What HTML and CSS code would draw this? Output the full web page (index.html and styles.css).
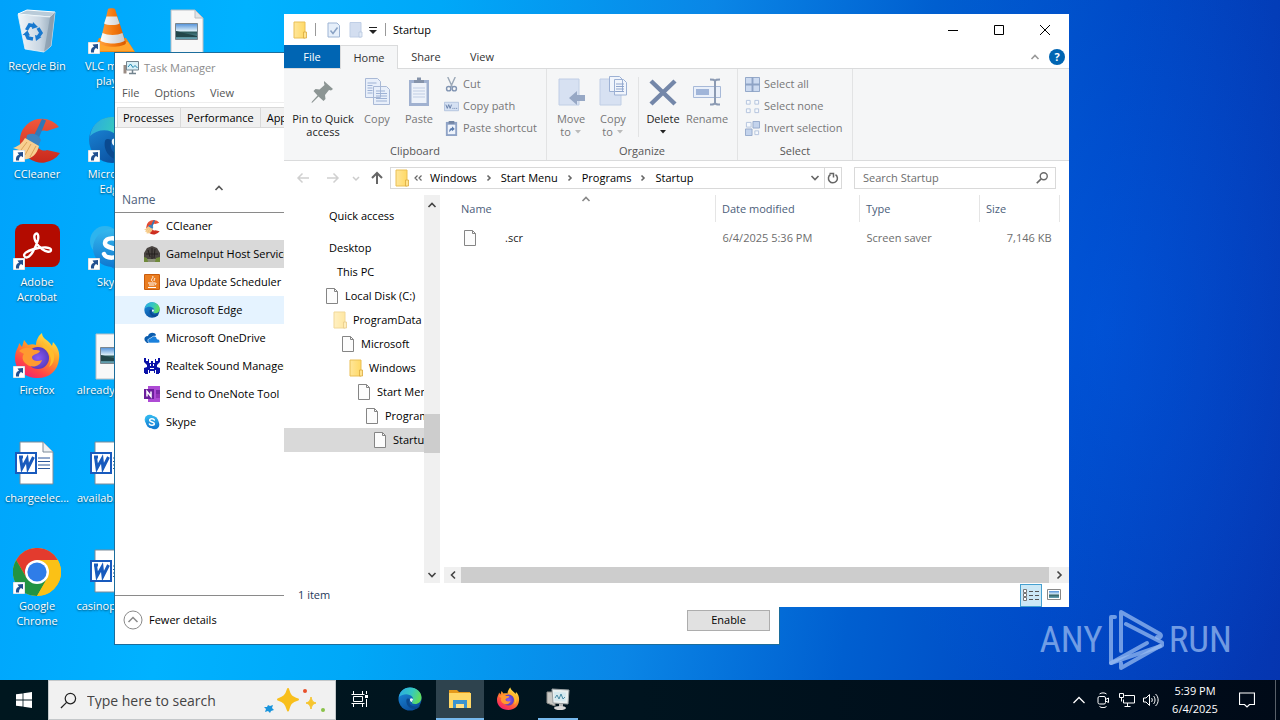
FILE: index.html
```html
<!DOCTYPE html>
<html lang="en">
<head>
<meta charset="utf-8">
<title>Startup</title>
<link rel="stylesheet" href="styles.css">
</head>
<body>
<svg class="defs" aria-hidden="true">
  <defs>
    <linearGradient id="gEdgeA" x1="0" y1="0" x2="1" y2="0.3"><stop offset="0" stop-color="#2aa8e6"/><stop offset=".6" stop-color="#35c8c0"/><stop offset="1" stop-color="#5fdc62"/></linearGradient>
    <linearGradient id="gEdgeB" x1="0" y1="0" x2="0.6" y2="1"><stop offset="0" stop-color="#1c8fe0"/><stop offset="1" stop-color="#0b4f9e"/></linearGradient>
    <linearGradient id="gFox" x1="0.8" y1="0" x2="0.2" y2="1"><stop offset="0" stop-color="#fff04a"/><stop offset=".4" stop-color="#ff9a28"/><stop offset=".75" stop-color="#ff4548"/><stop offset="1" stop-color="#f01c78"/></linearGradient>
    <radialGradient id="gFoxIn"><stop offset="0" stop-color="#8a5cf5"/><stop offset="1" stop-color="#5a3cc0"/></radialGradient>
    <linearGradient id="gCone" x1="0" x2="1"><stop offset="0" stop-color="#ffa040"/><stop offset=".5" stop-color="#f47a10"/><stop offset="1" stop-color="#d85a00"/></linearGradient>
    <linearGradient id="gConeW" x1="0" x2="1"><stop offset="0" stop-color="#ffffff"/><stop offset="1" stop-color="#c4c8cc"/></linearGradient>
    <linearGradient id="gBin" x1="0" x2="1"><stop offset="0" stop-color="#f2f6fa"/><stop offset=".6" stop-color="#c9d6e2"/><stop offset="1" stop-color="#8da3b5"/></linearGradient>
    <linearGradient id="gCc" x1="0" y1="0" x2="0" y2="1"><stop offset="0" stop-color="#f0583c"/><stop offset="1" stop-color="#c8281c"/></linearGradient>
    <linearGradient id="gPhoto" x1="0" y1="0" x2="0" y2="1"><stop offset="0" stop-color="#4f8fd8"/><stop offset=".45" stop-color="#d8ecf8"/><stop offset=".55" stop-color="#2d5a5c"/><stop offset="1" stop-color="#6aa6b8"/></linearGradient>
    <linearGradient id="gSky" x1="0" y1="0" x2="0" y2="1"><stop offset="0" stop-color="#35b8ee"/><stop offset="1" stop-color="#0f78d0"/></linearGradient>
    <linearGradient id="gFold" x1="0" x2="1"><stop offset="0" stop-color="#ffe69a"/><stop offset="1" stop-color="#ffd965"/></linearGradient>
  </defs>
  <symbol id="shortcut" viewBox="0 0 12 12"><path d="M0 0h12v12H0z" fill="#fff" stroke="#9ab" stroke-width=".6"/><path d="M3 10.500C2.600 7.500 3.500 5.500 6 4.800L4.500 2.500 10 2v5.300L8 6.100C6.500 7 6 8.200 6 10.500z" fill="#23508f"/></symbol>
  <symbol id="bin" viewBox="0 0 48 48"><path d="M5 6l9-4 28 2-5 5z" fill="#b9cbd9" stroke="#fff"/><path d="M5 6.500L37 9l5-5L38 38l-7 6-19-3z" fill="url(#gBin)" stroke="#eef4f8" stroke-width=".8"/><path d="M37 9l5-5L38 38l-7 6z" fill="#8499aa" opacity=".7"/><g fill="none" stroke="#1879cf" stroke-width="3.400"><path d="M13.500 22l3-5 5 1"/><path d="M25 20l3 5-3 4"/><path d="M20 31l-5-1-2-4.500"/></g><path d="M20 14l5 5-6 2zM28.500 29l-5.500 4-1-6zM9.500 27l5-4.500 2.500 5z" fill="#1879cf"/></symbol>
  <symbol id="cone" viewBox="0 0 48 48"><path d="M8 37l3-7h27l9 14H6z" fill="#f08a18"/><path d="M4 40l6-5 30-1 6 9H5z" fill="#ffa52e"/><path d="M20 1c0-1 7-1 7 0l11 34c-2 5-24 5-26 0z" fill="url(#gCone)"/><path d="M18.500 8.500h10.500l2.500 7c-3 2-12 2-15.400 0zM14.500 25c5 2.500 15 2.500 20 0l2.300 7.500c-4 4-20 4-24.500 0z" fill="url(#gConeW)"/></symbol>
  <symbol id="photo" viewBox="0 0 48 48"><path d="M8 2h24l8 8v37H8z" fill="#f8f8f8" stroke="#b9bec3"/><path d="M32 2v8h8z" fill="#dfe3e6" stroke="#b9bec3"/><path d="M12.500 15.500h22v16h-22z" fill="url(#gPhoto)" stroke="#7b868e"/><path d="M13 23l8 2 13 3v1H13z" fill="#22464a"/></symbol>
  <symbol id="cc" viewBox="0 0 48 48"><path d="M46 11A22 22 0 1 0 47 37L34 34A9 10 0 1 1 34 15z" fill="url(#gCc)"/><path d="M29 3l4 1.500-7 17-5-2z" fill="#3178b8"/><path d="M14 19c6-3 12 0 14 5l-3 7-12-7z" fill="#3d84c0"/><path d="M12 22l14 8c-2 9-9 15-20 13l3-4-6-1 3-4-6-2c6-2 9-5 12-10z" fill="#f8cf90"/><path d="M14 26l-6 8M18 28l-6 11M23 30l-6 11" stroke="#dba45c"/></symbol>
  <symbol id="edge" viewBox="0 0 48 48"><circle cx="24" cy="24" r="23" fill="url(#gEdgeB)"/><path d="M2 20C4 7 14 1 24 1c13 0 23 9 23 20 0 8-6 13-13 13-5 0-7-2-6-4 3-3 3-8 0-11-5-6-18-7-26 1z" fill="url(#gEdgeA)"/><path d="M17 25c-2 8 4 20 18 19 4 0 8-4 9-7-9 4-19 2-21-5-1-3 0-5 2-7-3-2-7-3-8 0z" fill="#0a4a90"/><path d="M24 24c1-2 4-2 6 0 0 3-2 4-2 6-3 0-5-3-4-6z" fill="#e9f6fc"/></symbol>
  <symbol id="acro" viewBox="0 0 48 48"><rect x="2" y="0" width="45" height="43" rx="8" fill="#b30b00"/><path d="M12 33c-3-3 2-6 9-8 9-2.500 17-2 17 1s-5 2-9-1C23 21 20 13 22 10.500s4 0 3 5C23.500 22 17 36 12 33z" fill="none" stroke="#fff" stroke-width="2.400"/></symbol>
  <symbol id="skype" viewBox="0 0 48 48"><circle cx="17" cy="17" r="15" fill="#2db4ee"/><circle cx="32" cy="32" r="14" fill="#127fd4"/><circle cx="24" cy="24" r="19" fill="url(#gSky)"/><path d="M31 18c-2-5-14-5-14 1s14 4 14 10-13 6-15 1" fill="none" stroke="#fff" stroke-width="4.500" stroke-linecap="round"/></symbol>
  <symbol id="fox" viewBox="0 0 48 48"><path d="M11 8l4 5c3-1 6-1 8 0 0-5 3-10 6-12 0 6 7 7 10 13l1-4c5 5 7 11 6 17C45 39 36 46 25 46 12 46 2 38 2 26c0-8 4-11 4-15l3 4z" fill="url(#gFox)"/><circle cx="25" cy="26" r="11" fill="url(#gFoxIn)"/><path d="M6 19c5-4 10-4 15-1 3 0 5 0 6 1-1 3-7 3-8 6 0 4 6 5 10 3-2 7-11 9-17 3-3-3-3-7-1-9z" fill="#ff9a30"/><path d="M31 16c6 4 9 12 5 19 4-2 6-8 5-13-2-7-8-7-12-13 0 3 0 5 2 7z" fill="#ffbd2c"/></symbol>
  <symbol id="word" viewBox="0 0 48 48"><path d="M7 2h23l10 10v32H7z" fill="#fff" stroke="#7c8b99"/><path d="M30 2v10h10" fill="#eef1f4" stroke="#7c8b99"/><path d="M25 18h12M25 21.500h12M25 25h12M25 28.500h12" stroke="#2b579a"/><path d="M3 13h20v20H3z" fill="#fff" stroke="#185abd" stroke-width="2"/><path d="M6 17h4M7.500 17l1.500 11 5-9 1 9 5.500-11" fill="none" stroke="#185abd" stroke-width="3"/></symbol>
  <symbol id="chrome" viewBox="0 0 48 48"><circle cx="24" cy="24" r="24" fill="#fbc116"/><path d="M24 12h20.800A24 24 0 0 0 3.200 12l10.400 18z" fill="#e33b2e"/><path d="M3.200 12A24 24 0 0 0 24 48l10.400-18H13.600z" fill="#229342"/><path d="M34.400 30L24 48A24 24 0 0 0 44.800 12H24z" fill="#fbc116"/><circle cx="24" cy="24" r="12" fill="#fff"/><circle cx="24" cy="24" r="9.600" fill="#2f7de8"/></symbol>
  <symbol id="tm" viewBox="0 0 16 16"><path d="M.5 5h3v8.500h-3z" fill="#9a8c84"/><path d="M3.500 1.500h12v8.500h-12z" fill="#d8f0f8" stroke="#72838e"/><path d="M5 7l2.500-3L10 7.500l2-2L14.500 8" fill="none" stroke="#1f87b0"/><path d="M9.500 10v3M6 13.500h7" stroke="#72838e" stroke-width="1.500"/></symbol>
  <symbol id="tank" viewBox="0 0 16 16"><path d="M0 8h16v8H0z" fill="#8a8f78"/><path d="M0 13V7l3-5 5-2 5 2 3 5v6z" fill="#4a4542"/><path d="M4 4l2 7M8 2v11M11 3l-1 9M2 8h12" stroke="#25211f"/><path d="M0 11l3 1 1 4H0zM12 12l4-1v5h-5z" fill="#6f8a3a"/></symbol>
  <symbol id="java" viewBox="0 0 16 16"><rect width="16" height="16" rx="1" fill="#c95c0c"/><rect x="1" y="1" width="14" height="14" fill="#ea7d20"/><path d="M8.500 2c2 2-3 3 0 5.500M10.500 4c1 1-1.500 2 0 3M4 9h7c2 0 1 2-.5 2M5 11h5M4 13.500h8" fill="none" stroke="#fff"/></symbol>
  <symbol id="cloud" viewBox="0 0 16 16"><path d="M1 11c-2-4 2-5 3-5 1-4 7-4 8-1L5 13H3z" fill="#0a5cae"/><path d="M5 13c-3-4 1-5 2-5 2-3 6-2 6 1 3 0 4 4 1 4z" fill="#1a80dc" stroke="#fff" stroke-width=".6"/></symbol>
  <symbol id="crab" viewBox="0 0 16 16"><path d="M0 0h2v3h2V1h1v4h2V3h2v2h2V1h1v2h2V0h2v4l-3 3v2l3 1v5h-1v1h-3v-4h-1v3h-1v-2H6v2H5v-3H4v4H1v-1H0v-5l3-1V7L0 4z" fill="#0b12a8"/><path d="M6 6h1v2H6zM9 6h1v2H9zM6 10h4v1H6z" fill="#fff"/></symbol>
  <symbol id="onenote" viewBox="0 0 16 16"><path d="M4 0h12v16H4z" fill="#ae4bd5"/><path d="M12 4h4v4h-4z" fill="#7b28a8"/><path d="M12 8h4v4h-4z" fill="#9333b8"/><path d="M0 3h10v10H0z" fill="#6b1e9c"/><path d="M3 10.500v-5l4 5v-5" fill="none" stroke="#fff" stroke-width="1.500"/></symbol>
  <symbol id="folder" viewBox="0 0 14 18"><path d="M1 1h11v16H1z" fill="url(#gFold)" stroke="#eabf55"/><path d="M10.500 11h3v6h-3z" fill="#ffe390" stroke="#dba93c" stroke-width=".8"/></symbol>
  <symbol id="page" viewBox="0 0 14 18"><path d="M1.500 1.500h8l3 3v12h-11z" fill="#fcfcfc" stroke="#858585"/><path d="M9.500 1.500v3h3" fill="none" stroke="#858585"/></symbol>
  <symbol id="pageCheck" viewBox="0 0 14 18"><path d="M1 2h9l2.500 2.500V16H1z" fill="#e6effa" stroke="#9db4d4"/><path d="M3.500 9.500l2.500 3 4.500-6" fill="none" stroke="#8aa2c4" stroke-width="1.500"/></symbol>
  <symbol id="pageBlue" viewBox="0 0 14 18"><path d="M1 1.500h11V16H1z" fill="#d3def0" stroke="#c0cfe6"/><path d="M10 11h3v5h-3z" fill="#e3ebf7" stroke="#b6c6de" stroke-width=".8"/></symbol>
  <symbol id="pin" viewBox="0 0 32 32"><path d="M17 5l9 8-2 1.500-2-.5-4 5 .5 4-2 2-5-4.500-6 6-1 .5.500-1.500 5.500-6-4-4.500 2-2 4 .5 5-4.500-.5-2z" fill="#8c9594"/></symbol>
  <symbol id="copy" viewBox="0 0 32 32"><g stroke="#a9b9d6" fill="#e8effa"><path d="M4.500 2.500h12l3 3v16h-15zM12.500 10.500h13l3 3v15h-16z"/><path d="M6.500 7h9M6.500 9.500h5M6.500 12h5M6.500 14.500h5M6.500 17h5M15 15h9M15 17.500h11M15 20h11M15 22.500h11M15 25h11" fill="none" stroke="#9db1d4"/></g></symbol>
  <symbol id="paste" viewBox="0 0 32 32"><path d="M6 4h20v26H6z" fill="#a0b1d0"/><path d="M8.500 7h15v20h-15z" fill="#edf2fa"/><path d="M11 7V4h3V1.500h4V4h3v3z" fill="#8593aa"/><path d="M10 12h12M10 15h12M10 18h12M10 21h12" stroke="#c0cde3"/></symbol>
  <symbol id="cut" viewBox="0 0 16 16"><path d="M4 0l5 11M12 0L7 11" stroke="#9aa7b6" stroke-width="1.500"/><circle cx="5" cy="12.500" r="2.300" fill="none" stroke="#8295b3" stroke-width="1.500"/><circle cx="11" cy="12.500" r="2.300" fill="none" stroke="#8295b3" stroke-width="1.500"/></symbol>
  <symbol id="path" viewBox="0 0 16 16"><path d="M.5 3.500h15v9H.5z" fill="#d5e1f3" stroke="#b2c3de"/><path d="M2 6l1.500 4L5 6l1.500 4L8 6M9 10h1M11 10h1M13 10h1" stroke="#647da6" fill="none"/></symbol>
  <symbol id="pasteS" viewBox="0 0 16 16"><path d="M2 1h12v15H2z" fill="#8fa3c6"/><path d="M4 4h8v10H4z" fill="#eef3fb"/><path d="M5 0h6v3H5z" fill="#7386a5"/><path d="M5.500 12c0-3 1-4.500 3-4.500V5.500l3 3-3 2.500V9.500c-1 0-2 1-3 2.500z" fill="#5b7cae"/></symbol>
  <symbol id="move" viewBox="0 0 32 32"><path d="M4 3h20v26H4z" fill="#d7e1f2" stroke="#c0cee5"/><path d="M14 22l8-7v4h8v6h-8v4z" fill="#97a8c5"/></symbol>
  <symbol id="copyTo" viewBox="0 0 32 32"><path d="M3 3h21v26H3z" fill="#d7e1f2" stroke="#c0cee5"/><path d="M12.500.5h10l3 3v12h-13zM17.500 3.500h9l3 3V19h-12z" fill="#f1f5fc" stroke="#9db1d4"/><path d="M19 8h8M19 10.500h8M19 13h8M19 15.500h8" stroke="#8fa5cc"/></symbol>
  <symbol id="del" viewBox="0 0 32 32"><path d="M4 5l24 23M28 5L4 28" stroke="#7487a9" stroke-width="4.500"/></symbol>
  <symbol id="rename" viewBox="0 0 32 32"><path d="M2.500 10.500h27v11h-27z" fill="#eaf0fa" stroke="#a7b9d8"/><path d="M5 13h13v6H5z" fill="#a0b5d9"/><path d="M19 3.500c3 0 5 0 5 2v21c0 2-2 2-5 2M29 3.500c-3 0-5 0-5 2v21c0 2 2 2 5 2" fill="none" stroke="#8b9ab3" stroke-width="2"/></symbol>
  <symbol id="selAll" viewBox="0 0 16 16"><path d="M.5 .5h15v15H.5z" fill="#ccdaf0" stroke="#8ea3c5"/><path d="M8 0v16M0 8h16" stroke="#8ea3c5" stroke-width="2"/></symbol>
  <symbol id="selNone" viewBox="0 0 16 16"><path d="M1.500 1.500h4v4h-4zM10.500 1.500h4v4h-4zM1.500 10.500h4v4h-4zM10.500 10.500h4v4h-4z" fill="#f6f9fd" stroke="#b3c3dd"/></symbol>
  <symbol id="selInv" viewBox="0 0 16 16"><path d="M1.500 1.500h5v5h-5zM10.500 10.500h4v4h-4z" fill="#f6f9fd" stroke="#b3c3dd"/><path d="M8.500 .5h7v7h-7zM.5 8.500h7v7h-7z" fill="#c3d3ec" stroke="#94a9cb"/></symbol>
  <symbol id="mag" viewBox="0 0 16 16"><circle cx="10" cy="6" r="4" fill="none" stroke="#6a6a6a" stroke-width="1.600"/><path d="M7 9l-5 5" stroke="#6a6a6a" stroke-width="2"/></symbol>
  <symbol id="up" viewBox="0 0 10 10"><path d="M1.500 7L5 3.500 8.500 7" fill="none" stroke="currentColor" stroke-width="1.600"/></symbol>
  <symbol id="down" viewBox="0 0 10 10"><path d="M1.500 3L5 6.500 8.500 3" fill="none" stroke="currentColor" stroke-width="1.600"/></symbol>
  <symbol id="left" viewBox="0 0 10 10"><path d="M7 1.500L3.500 5 7 8.500" fill="none" stroke="currentColor" stroke-width="1.600"/></symbol>
  <symbol id="right" viewBox="0 0 10 10"><path d="M3.500 1.500L7 5 3.500 8.500" fill="none" stroke="currentColor" stroke-width="1.600"/></symbol>
  <symbol id="sep" viewBox="0 0 10 10"><path d="M3.500 2.500L6 5 3.500 7.500" fill="none" stroke="currentColor" stroke-width="1.600"/></symbol>
  <symbol id="tri" viewBox="0 0 8 4"><path d="M1 0h6L4 3.500z" fill="currentColor"/></symbol>
</svg>

<div class="screen">
  <main class="desktop">
    <div class="icons">
      <button class="icon"><svg><use href="#bin"/></svg><span>Recycle Bin</span></button>
      <button class="icon lnk"><svg><use href="#cc"/></svg><svg class="arrow"><use href="#shortcut"/></svg><span>CCleaner</span></button>
      <button class="icon lnk"><svg><use href="#acro"/></svg><svg class="arrow"><use href="#shortcut"/></svg><span>Adobe Acrobat</span></button>
      <button class="icon lnk"><svg><use href="#fox"/></svg><svg class="arrow"><use href="#shortcut"/></svg><span>Firefox</span></button>
      <button class="icon"><svg><use href="#word"/></svg><span>chargeelec...</span></button>
      <button class="icon lnk"><svg><use href="#chrome"/></svg><svg class="arrow"><use href="#shortcut"/></svg><span>Google Chrome</span></button>
      <button class="icon lnk"><svg><use href="#cone"/></svg><svg class="arrow"><use href="#shortcut"/></svg><span>VLC media player</span></button>
      <button class="icon lnk"><svg><use href="#edge"/></svg><svg class="arrow"><use href="#shortcut"/></svg><span>Microsoft Edge</span></button>
      <button class="icon lnk"><svg><use href="#skype"/></svg><svg class="arrow"><use href="#shortcut"/></svg><span>Skype</span></button>
      <button class="icon"><svg><use href="#photo"/></svg><span>alreadyback...</span></button>
      <button class="icon"><svg><use href="#word"/></svg><span>availableme...</span></button>
      <button class="icon"><svg><use href="#word"/></svg><span>casinopoker...</span></button>
      <button class="icon"><svg><use href="#photo"/></svg></button>
    </div>

    <div class="brand">
      <span>ANY</span>
      <svg viewBox="0 0 56 62"><g fill="none" stroke="currentColor" stroke-width="4" stroke-linejoin="round" stroke-linecap="round"><path d="M7 8H3v46L53 37c2-1 2-3 0-4L18 15"/><path d="M13 42V3l39 22c2 2 0 5-3 3"/><path d="M3 54l36-20M13 54v5l39-22"/></g></svg>
      <span>RUN</span>
    </div>

    <section class="taskmgr" aria-label="Task Manager">
      <header class="tm-title"><svg class="i16"><use href="#tm"/></svg>Task Manager</header>
      <nav class="tm-menu"><button>File</button><button>Options</button><button>View</button></nav>
      <div class="tm-tabs"><button>Processes</button><button>Performance</button><button>App history</button></div>
      <div class="tm-list">
        <table>
          <thead><tr><th><svg class="sort"><use href="#up"/></svg>Name</th></tr></thead>
          <tbody>
            <tr><td><svg class="i16"><use href="#cc"/></svg>CCleaner</td></tr>
            <tr class="selected"><td><svg class="i16"><use href="#tank"/></svg>GameInput Host Service</td></tr>
            <tr><td><svg class="i16"><use href="#java"/></svg>Java Update Scheduler</td></tr>
            <tr class="hover"><td><svg class="i16"><use href="#edge"/></svg>Microsoft Edge</td></tr>
            <tr><td><svg class="i16"><use href="#cloud"/></svg>Microsoft OneDrive</td></tr>
            <tr><td><svg class="i16"><use href="#crab"/></svg>Realtek Sound Manager</td></tr>
            <tr><td><svg class="i16"><use href="#onenote"/></svg>Send to OneNote Tool</td></tr>
            <tr><td><svg class="i16"><use href="#skype"/></svg>Skype</td></tr>
          </tbody>
        </table>
      </div>
      <footer class="tm-foot">
        <button class="fewer"><svg viewBox="0 0 20 20"><circle cx="10" cy="10" r="9" fill="none" stroke="#8a8a8a"/><path d="M5.500 12L10 7.500l4.500 4.500" fill="none" stroke="#8a8a8a" stroke-width="1.500"/></svg>Fewer details</button>
        <button class="enable">Enable</button>
      </footer>
    </section>

    <section class="explorer" aria-label="Startup">
      <header class="ex-title">
        <div class="quick">
          <svg class="file"><use href="#folder"/></svg><i></i>
          <button aria-label="Properties"><svg class="file"><use href="#pageCheck"/></svg></button>
          <button aria-label="New folder"><svg class="file"><use href="#pageBlue"/></svg></button>
          <button class="custom" aria-label="Customize"><svg viewBox="0 0 8 8"><path d="M0 1.500h8" stroke="#222"/><path d="M0 4h8L4 8z" fill="#222"/></svg></button><i></i>
        </div>
        <h1>Startup</h1>
        <div class="controls">
          <button aria-label="Minimize"><svg viewBox="0 0 10 10"><path d="M0 5.500h10" stroke="#000"/></svg></button>
          <button aria-label="Maximize"><svg viewBox="0 0 10 10"><path d="M.5 .5h9v9h-9z" fill="none" stroke="#000"/></svg></button>
          <button aria-label="Close"><svg viewBox="0 0 10 10"><path d="M0 0l10 10M10 0L0 10" stroke="#000"/></svg></button>
        </div>
      </header>
      <nav class="ex-tabs">
        <button class="file-tab">File</button><button class="active">Home</button><button>Share</button><button>View</button>
        <span class="help"><svg class="min"><use href="#up"/></svg><button aria-label="Help">?</button></span>
      </nav>
      <div class="ribbon">
        <div class="group clip">
          <div class="tools">
            <button class="big pinbtn on"><svg><use href="#pin"/></svg>Pin to Quick access</button>
            <button class="big"><svg><use href="#copy"/></svg>Copy</button>
            <button class="big"><svg><use href="#paste"/></svg>Paste</button>
            <div class="small">
              <button><svg><use href="#cut"/></svg>Cut</button>
              <button><svg><use href="#path"/></svg>Copy path</button>
              <button><svg><use href="#pasteS"/></svg>Paste shortcut</button>
            </div>
          </div>
          <p>Clipboard</p>
        </div>
        <div class="group org">
          <div class="tools">
            <button class="big"><svg><use href="#move"/></svg>Move<span>to <svg class="tri"><use href="#tri"/></svg></span></button>
            <button class="big"><svg><use href="#copyTo"/></svg>Copy<span>to <svg class="tri"><use href="#tri"/></svg></span></button>
            <i></i>
            <button class="big on"><svg><use href="#del"/></svg>Delete<span><svg class="tri"><use href="#tri"/></svg></span></button>
            <button class="big"><svg><use href="#rename"/></svg>Rename</button>
          </div>
          <p>Organize</p>
        </div>
        <div class="group sel">
          <div class="tools">
            <div class="small">
              <button><svg><use href="#selAll"/></svg>Select all</button>
              <button><svg><use href="#selNone"/></svg>Select none</button>
              <button><svg><use href="#selInv"/></svg>Invert selection</button>
            </div>
          </div>
          <p>Select</p>
        </div>
      </div>
      <div class="ex-address">
        <div class="history">
          <button aria-label="Back"><svg viewBox="0 0 14 14"><path d="M13 7H2M6.500 2.500L2 7l4.500 4.500" fill="none" stroke="#d0d0d0" stroke-width="1.500"/></svg></button>
          <button aria-label="Forward"><svg viewBox="0 0 14 14"><path d="M1 7h11M7.500 2.500L12 7l-4.500 4.500" fill="none" stroke="#d0d0d0" stroke-width="1.500"/></svg></button>
          <button class="recent" aria-label="Recent"><svg viewBox="0 0 10 10"><path d="M2 4l3 3 3-3" fill="none" stroke="#ccc" stroke-width="1.500"/></svg></button>
          <button aria-label="Up"><svg viewBox="0 0 14 14"><path d="M7 13V2M2 7l5-5 5 5" fill="none" stroke="#666" stroke-width="2"/></svg></button>
        </div>
        <div class="crumbs">
          <svg class="file"><use href="#folder"/></svg><svg class="more" viewBox="0 0 10 10"><path d="M4.500 2.500L2 5l2.500 2.500M8.500 2.500L6 5l2.500 2.500" fill="none" stroke="#666" stroke-width="1.200"/></svg>
          <a href="#w">Windows</a><svg><use href="#sep"/></svg><a href="#s">Start Menu</a><svg><use href="#sep"/></svg><a href="#p">Programs</a><svg><use href="#sep"/></svg><a href="#u">Startup</a>
          <button class="drop" aria-label="Previous locations"><svg><use href="#down"/></svg></button>
          <button class="refresh" aria-label="Refresh"><svg viewBox="0 0 12 12"><path d="M3.500 2.500A4.500 4.500 0 1 0 8.500 2.600" fill="none" stroke="#666" stroke-width="1.500"/><path d="M2.500 1.500h4V5.500" fill="none" stroke="#666" stroke-width="1.500"/></svg></button>
        </div>
        <label class="search"><input type="text" placeholder="Search Startup" aria-label="Search Startup"><svg><use href="#mag"/></svg></label>
      </div>
      <div class="ex-body">
        <div class="tree">
          <ul>
            <li class="root quickacc"><button>Quick access</button></li>
            <li class="root"><button>Desktop</button></li>
            <li class="d1"><button>This PC</button></li>
            <li class="d2"><button><svg class="file"><use href="#page"/></svg>Local Disk (C:)</button></li>
            <li class="d3"><button><svg class="file pale"><use href="#folder"/></svg>ProgramData</button></li>
            <li class="d4"><button><svg class="file"><use href="#page"/></svg>Microsoft</button></li>
            <li class="d5"><button><svg class="file"><use href="#folder"/></svg>Windows</button></li>
            <li class="d6"><button><svg class="file"><use href="#page"/></svg>Start Menu</button></li>
            <li class="d7"><button><svg class="file"><use href="#page"/></svg>Programs</button></li>
            <li class="d8 current"><button><svg class="file"><use href="#page"/></svg>Startup</button></li>
          </ul>
        </div>
        <div class="vbar"><button aria-label="Scroll up"><svg><use href="#up"/></svg></button><span class="track"><span class="thumb"></span></span><button aria-label="Scroll down"><svg><use href="#down"/></svg></button></div>
        <div class="files">
          <table>
            <colgroup><col><col class="c-date"><col class="c-type"><col class="c-size"></colgroup>
            <thead><tr><th><svg class="sort"><use href="#up"/></svg>Name</th><th>Date modified</th><th>Type</th><th>Size</th></tr></thead>
            <tbody><tr><td class="name"><svg class="file"><use href="#page"/></svg>.scr</td><td>6/4/2025 5:36 PM</td><td>Screen saver</td><td class="size">7,146 KB</td></tr></tbody>
          </table>
          <div class="hbar"><button aria-label="Scroll left"><svg><use href="#left"/></svg></button><span></span><button aria-label="Scroll right"><svg><use href="#right"/></svg></button></div>
        </div>
      </div>
      <footer class="ex-status">
        <span>1 item</span>
        <button class="view active" aria-label="Details"><svg viewBox="0 0 18 16"><path d="M1.500 2.500h3v3h-3zM1.500 6.500h3v3h-3zM1.500 10.500h3v3h-3z" fill="#fff" stroke="#777"/><path d="M7 4.500h4M13 4.500h4M7 8.500h4M13 8.500h4M7 12.500h4M13 12.500h4" stroke="#555"/></svg></button>
        <button class="view" aria-label="Large icons"><svg viewBox="0 0 18 16"><path d="M2.500 2.500h13v10h-13z" fill="#fff" stroke="#888"/><path d="M4 4h10v7H4z" fill="url(#gPhoto)"/></svg></button>
      </footer>
    </section>
  </main>

  <footer class="taskbar">
    <button class="start" aria-label="Start"><svg viewBox="0 0 16 16"><path d="M0 2.300l6.600-.9v6.200H0zM7.400 1.300L16 0v7.600H7.400zM0 8.400h6.600v6.200L0 13.700zM7.400 8.400H16V16l-8.600-1.200z" fill="#fff"/></svg></button>
    <label class="find">
      <svg class="lens" viewBox="0 0 18 18"><circle cx="11" cy="7" r="5.500" fill="none" stroke="#222" stroke-width="1.300"/><path d="M7 11l-6 6" stroke="#222" stroke-width="1.300"/></svg>
      <input type="text" placeholder="Type here to search" aria-label="Type here to search">
      <svg class="spark" viewBox="0 0 64 28"><path d="M25 3c2 7 3 8 10 10.500-7 2-8 4-10 11-2-7-4-9-10-11 6-2.500 8-3.500 10-10.500z" fill="#f8bf1c" stroke="#f8bf1c" stroke-width="2" stroke-linejoin="round"/><path d="M48 11c1 4 2 5 5 6-3 1-4 2-5 6-1-4-2-5-5-6 3-1 4-2 5-6z" fill="#f6c52e" stroke="#f6c52e"/><path d="M5 19l2 1 3-1-1 3 2 2-3 1-1 2-2-2-3 1 1-3-2-2h3z" fill="#1994dc"/><circle cx="42" cy="5" r="2" fill="#e8502a"/><circle cx="60" cy="24" r="2" fill="#8ac249"/></svg>
    </label>
    <button class="app" aria-label="Task View"><svg class="tv" viewBox="0 0 18 18"><path d="M2.500 1v3.500h9V1M2.500 17v-3.500h9V17M2.500 6.500h9v5h-9zM.5 4.500h13M.5 13.500h13M15.500 1v3M15.500 9v8" fill="none" stroke="#fff" stroke-width="1"/><path d="M14 5h3v3h-3z" fill="#fff"/></svg></button>
    <button class="app edge" aria-label="Microsoft Edge"><svg><use href="#edge"/></svg></button>
    <button class="app open current" aria-label="File Explorer"><svg viewBox="0 0 24 24"><path d="M1 3h8l2 2h11v4H1z" fill="#e59a1b"/><path d="M1 6h22v15H1z" fill="#ffd766"/><path d="M5 21v-8h14v8h-3v-4H8v4z" fill="#3b93d0"/><path d="M8 17h8v4H8z" fill="#ffe08a"/></svg></button>
    <button class="app" aria-label="Firefox"><svg><use href="#fox"/></svg></button>
    <button class="app open tmapp" aria-label="Task Manager"><svg viewBox="0 0 24 24"><path d="M1 5h8v14l-8-3z" fill="#c8c8c4" stroke="#8f8f8c"/><path d="M6 2l17 1-1 14-15-1z" fill="#e9efef" stroke="#9aa0a2"/><path d="M8 5l12 .5-.5 9-11-.5z" fill="#d5e9ef"/><path d="M9 11l2-3 2 4 2-5 2 5 2-2" fill="none" stroke="#4a8ba4"/><path d="M13 17h4v3h-4z" fill="#b8b8b8"/><ellipse cx="14" cy="21" rx="6" ry="2" fill="#d8d8d8"/></svg></button>
    <div class="tray">
      <svg viewBox="0 0 16 16"><path d="M2.500 11L8 5.500l5.500 5.500" fill="none" stroke="#fff" stroke-width="1.300"/></svg>
      <svg viewBox="0 0 16 16"><g fill="none" stroke="#fff"><rect x="3" y="4.500" width="7.500" height="7.500" rx="1.500"/><path d="M10.500 7.500l3-1.500v4.500l-3-1.500M4.500 2C6 .5 10 .5 11.500 2M4.500 14.500c1.500 1.500 5.500 1.500 7 0"/></g></svg>
      <svg viewBox="0 0 16 16"><g fill="none" stroke="#fff"><path d="M5.500 3.500h10v7.500h-11V7.500M8.500 11v3M5.500 14.500h6M.5 1.500h4v4h-4zM2.500 5.500v4"/></g></svg>
      <svg viewBox="0 0 16 16"><g fill="none" stroke="#fff"><path d="M.5 6v4h2.500l3.500 3.500v-11L3 6zM8.500 6c1 1 1 3 0 4M10.500 4c2 2 2 6 0 8M12.500 2c3.500 3 3.500 9 0 12"/></g></svg>
      <time>5:39 PM<br>6/4/2025</time>
      <svg class="note" viewBox="0 0 16 16"><path d="M.5 1h15v11.500h-5L8 15l-2.500-2.500h-5z" fill="none" stroke="#fff" stroke-width="1.200"/></svg>
      <button class="show" aria-label="Show desktop"></button>
    </div>
  </footer>
</div>
</body>
</html>
```
FILE: styles.css
```css
* { box-sizing: border-box; }
body {
  margin: 0;
  font: 11px/16px "Open Sans", "Noto Sans", sans-serif;
  color: #000;
}
button {
  font: inherit;
  color: inherit;
  background: none;
  border: 0;
  padding: 0;
  margin: 0;
}
input { font: inherit; border: 0; background: none; padding: 0; min-width: 0; outline: 0; }
a { color: inherit; text-decoration: none; }
ul { list-style: none; margin: 0; padding: 0; }
p, h1 { margin: 0; font: inherit; }
table { border-collapse: collapse; width: 100%; table-layout: fixed; }
th { font-weight: 400; text-align: left; }
th, td { padding: 0; }
svg { display: block; flex: none; }
.defs { position: absolute; width: 0; height: 0; }
.i16 { width: 16px; height: 16px; }
.file { width: 14px; height: 18px; }

.screen { display: flex; flex-direction: column; height: 100vh; overflow: hidden; }
.desktop {
  position: relative;
  flex: 1;
  min-height: 0;
  overflow: hidden;
  background:
    radial-gradient(ellipse 260px 420px at 86% 48%, rgba(0, 96, 240, .4), transparent),
    linear-gradient(98deg, #00a2fb 0%, #00b2ff 18%, #00a8f8 32%, #0a86e6 52%, #005fd0 68%, #0049c4 82%, #0535b0 100%);
}

/* desktop icons */
.icons {
  display: grid;
  grid-auto-flow: column;
  grid-template-rows: repeat(6, 108px);
  grid-auto-columns: 75px;
  justify-content: start;
}
.icon {
  position: relative;
  display: flex;
  flex-direction: column;
  align-items: center;
  padding: 8px 1px 0 0;
  color: #fff;
  line-height: 15px;
  text-shadow: 0 1px 2px rgba(0, 0, 0, .6);
}
.icon svg { width: 48px; height: 48px; }
.icon span { padding-top: 2px; width: 74px; }
.icon.lnk span { width: 64px; }
.icon .arrow { position: absolute; left: 13px; top: 42px; width: 12px; height: 12px; }

.brand {
  position: absolute;
  right: 48px;
  bottom: 9px;
  display: flex;
  align-items: center;
  gap: 5px;
  color: rgba(150, 185, 240, .75);
  font: 37px/62px "Liberation Sans Narrow", "Roboto Condensed", "DejaVu Sans Condensed", sans-serif;
}
.brand svg { width: 56px; height: 62px; }

/* task manager */
.taskmgr {
  position: absolute;
  left: 115px;
  top: 53px;
  right: 501px;
  bottom: 36px;
  display: flex;
  flex-direction: column;
  background: #fff;
  outline: 1px solid #1c6d9c;
}
.tm-title { display: flex; align-items: center; gap: 5px; height: 30px; padding-left: 8px; color: #8c8c8c; }
.tm-menu { display: flex; gap: 15px; height: 20px; padding-left: 7px; color: #555; border-bottom: 1px solid #eee; }
.tm-tabs { display: flex; padding: 4px 2px 0; border-bottom: 1px solid #d9d9d9; }
.tm-tabs button { height: 20px; padding: 0 6px 0 5px; background: #f0f0f0; border: 1px solid #d9d9d9; border-bottom: 0; }
.tm-tabs button + button { border-left: 0; padding-left: 6px; }
.tm-list { flex: 1; padding-top: 54px; border-bottom: 1px solid #8a8a8a; }
.tm-list th { position: relative; height: 30px; padding: 6px 0 0 7px; color: #4c607a; border-bottom: 1px solid #8a8a8a; font-size: 12px; }
.sort { position: absolute; width: 10px; height: 10px; color: #555; }
.tm-list .sort { left: 99px; top: 1px; }
.tm-list td { height: 28px; padding-left: 51px; position: relative; }
.tm-list td .i16 { position: absolute; left: 29px; top: 6px; }
.selected { background: #d9d9d9; }
.hover { background: #e5f3ff; }
.tm-foot { display: flex; justify-content: space-between; align-items: center; height: 48px; padding: 0 9px 0 8px; }
.fewer { display: flex; align-items: center; gap: 6px; }
.fewer svg { width: 20px; height: 20px; }
.enable { width: 83px; height: 21px; background: #e1e1e1; border: 1px solid #adadad; line-height: 18px; }

/* file explorer */
.explorer {
  position: absolute;
  left: 284px;
  top: 14px;
  right: 211px;
  bottom: 73px;
  display: flex;
  flex-direction: column;
  background: #fff;
}
.ex-title { display: flex; align-items: center; height: 31px; padding: 0 1px 0 9px; }
.quick { display: flex; align-items: center; gap: 8px; padding-right: 7px; }
.quick i { width: 1px; height: 13px; background: #999; }
.quick button:first-of-type { padding-left: 3px; }
.quick .custom { margin-left: -2px; }
.custom svg { width: 8px; height: 8px; }
.controls { display: flex; margin-left: auto; }
.controls button { display: grid; place-items: center; width: 46px; height: 31px; }
.controls svg { width: 10px; height: 10px; }

.ex-tabs { display: flex; height: 24px; border-bottom: 1px solid #dadbdc; color: #333; }
.ex-tabs > button { width: 56px; height: 24px; }
.ex-tabs .file-tab { background: #0065b3; color: #fff; height: 23px; }
.ex-tabs .active { width: 58px; background: #f5f6f7; border: 1px solid #dadbdc; border-bottom: 0; }
.help { display: flex; align-items: center; gap: 9px; margin-left: auto; padding-right: 4px; color: #999; }
.help .min { width: 10px; height: 10px; }
.help button { width: 16px; height: 16px; border-radius: 50%; background: #0065b3; color: #fff; font-weight: 700; }

.ribbon { display: flex; height: 92px; background: #f5f6f7; border-bottom: 1px solid #dadbdc; }
.group { display: flex; flex-direction: column; justify-content: space-between; padding: 3px 0 1px; border-right: 1px solid #e2e3e4; color: #777; }
.group p { text-align: center; color: #555; }
.clip { width: 263px; }
.org { width: 191px; }
.sel { width: 115px; }
.tools { display: flex; padding-left: 3px; }
.clip .tools { padding-left: 6px; }
.tools i { width: 1px; margin: 5px 3px 0 4px; background: #e2e3e4; height: 60px; }
.big { display: flex; flex-direction: column; align-items: center; width: 42px; padding-top: 4px; line-height: 13px; }
.org .big:last-child { width: 46px; }
.pinbtn { width: 66px; }
.on { color: #222; }
.big svg { width: 32px; height: 32px; margin-bottom: 4px; }
.big span { display: flex; align-items: center; justify-content: center; gap: 3px; height: 13px; }
.big .tri { width: 8px; height: 4px; margin: 0; color: #bbb; }
.on .tri { color: #222; }
.small { display: flex; flex-direction: column; padding: 1px 0 0 4px; }
.small button { display: flex; align-items: center; gap: 4px; height: 22px; white-space: nowrap; }
.small svg { width: 15px; height: 15px; }

.ex-address { display: flex; align-items: center; gap: 12px; height: 34px; padding-right: 13px; }
.history { display: flex; align-items: center; gap: 16px; padding-left: 12px; margin-right: -6px; }
.history svg { width: 14px; height: 14px; }
.history .recent { margin: 0 -7px 0 -5px; }
.history .recent svg { width: 10px; height: 10px; }
.crumbs { display: flex; flex: 1; align-items: center; gap: 7px; height: 22px; padding-left: 4px; border: 1px solid #d9d9d9; white-space: nowrap; }
.crumbs svg { width: 10px; height: 10px; color: #666; }
.crumbs .file { width: 14px; height: 18px; }
.crumbs .more { margin-left: -3px; }
.drop { margin-left: auto; margin-right: -3px; }
.refresh { display: grid; place-items: center; width: 17px; height: 20px; border-left: 1px solid #d9d9d9; }
.refresh svg { width: 12px; height: 12px; }
.search { display: flex; align-items: center; width: 202px; height: 22px; padding: 0 6px 0 8px; border: 1px solid #d9d9d9; }
.search input { flex: 1; }
.search input::placeholder { color: #6d6d6d; opacity: 1; }
.search svg { width: 14px; height: 14px; }

.ex-body { display: flex; flex: 1; min-height: 0; }
.tree { width: 140px; padding-top: 9px; overflow: hidden; }
.tree button { display: flex; align-items: center; gap: 6px; height: 24px; white-space: nowrap; }
.quickacc { padding-bottom: 8px; }
.root { padding-left: 45px; }
.d1 { padding-left: 53px; }
.d2 { padding-left: 41px; }
.d3 { padding-left: 49px; }
.d4 { padding-left: 57px; }
.d5 { padding-left: 65px; }
.d6 { padding-left: 73px; }
.d7 { padding-left: 81px; }
.d8 { padding-left: 89px; }
.tree .current { background: #d9d9d9; }
.pale { opacity: .6; }
.vbar { display: flex; flex-direction: column; width: 16px; margin-right: 4px; background: #f0f0f0; }
.vbar button, .hbar button { display: grid; place-items: center; width: 16px; height: 16px; color: #444; }
.vbar button:first-child { height: 20px; }
.vbar svg, .hbar svg { width: 10px; height: 10px; }
.track { display: flex; flex-direction: column; justify-content: flex-end; flex: 1; padding-bottom: 114px; }
.thumb { height: 39px; background: #cdcdcd; }
.files { display: flex; flex: 1; flex-direction: column; justify-content: space-between; min-width: 0; }
.files table { width: calc(100% - 9px); }
.c-date { width: 144px; }
.c-type { width: 120px; }
.c-size { width: 80px; }
.files th { position: relative; height: 27px; padding-left: 6px; color: #4c607a; border-right: 1px solid #e5e5e5; }
.files th:first-child { padding-left: 17px; }
.files .sort { left: 137px; top: -1px; color: #888; }
.files td { height: 32px; padding-left: 7px; color: #6d6d6d; }
.files .name { display: flex; align-items: center; gap: 28px; padding-left: 19px; color: #222; }
.files .size { text-align: right; padding-right: 8px; }
.hbar { display: flex; height: 16px; background: #f0f0f0; }
.hbar span { flex: 1; background: #cdcdcd; }
.hbar button:first-child { width: 17px; }
.hbar button:last-child { width: 20px; }
.ex-status { display: flex; align-items: center; gap: 1px; height: 24px; padding: 0 4px 0 14px; color: #1e395b; }
.ex-status span { flex: 1; }
.view { display: grid; place-items: center; width: 22px; height: 23px; border: 1px solid transparent; }
.view.active { background: #cce8f6; border-color: #45a0d0; }
.view svg { width: 18px; height: 16px; }

/* taskbar */
.taskbar { display: flex; height: 40px; background: linear-gradient(90deg, #00171f, #00141f 50%, #000a18); color: #fff; }
.start { display: grid; place-items: center; width: 48px; }
.start svg { width: 16px; height: 16px; }
.find { display: flex; align-items: center; width: 288px; padding: 0 8px 0 11px; background: #f1f1f1; border: 1px solid #c4c8ca; font-size: 14px; }
.find input { flex: 1; padding: 2px 0 0 10px; }
.find input::placeholder { color: #444; opacity: 1; }
.lens { width: 17px; height: 17px; }
.spark { width: 64px; height: 28px; }
.app { display: grid; place-items: center; width: 48px; border-bottom: 2px solid transparent; }
.app svg { width: 24px; height: 24px; }
.app .tv { width: 18px; height: 18px; }
.app.edge { width: 52px; }
.app.open { border-color: #76b9ed; }
.app.current { background: #2e434e; }
.app.tmapp { width: 40px; margin-left: 6px; }
.tray { display: flex; align-items: center; gap: 8px; margin-left: auto; }
.tray svg { width: 16px; height: 16px; }
.tray time { width: 56px; font-size: 11px; line-height: 18px; text-align: center; }
.tray .note { margin-left: 8px; }
.show { width: 5px; height: 40px; margin-left: 12px; border-left: 1px solid #59616a; }
```
